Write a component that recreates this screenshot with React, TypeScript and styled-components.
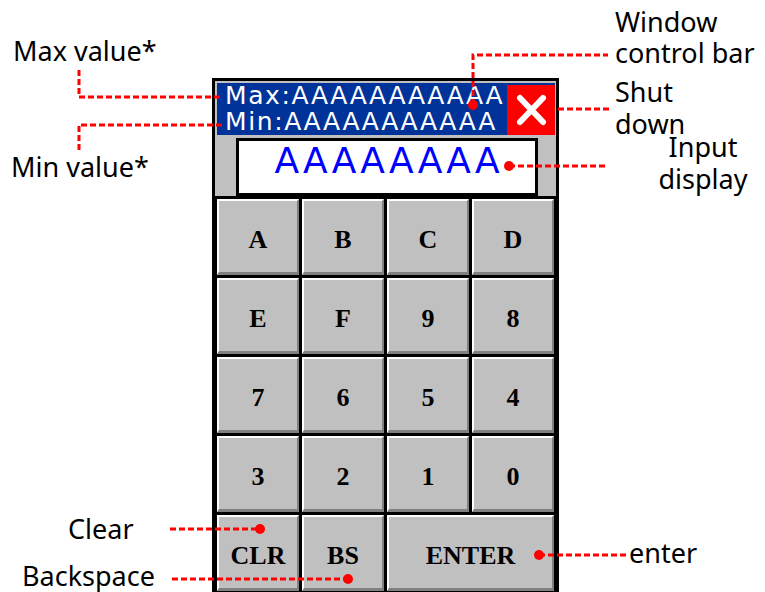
import React from "react";
import styled, { createGlobalStyle } from "styled-components";

const Global = createGlobalStyle`
  html, body { margin: 0; padding: 0; background: #fff; }
  body { font-family: "Noto Sans", "DejaVu Sans", sans-serif; }
`;

const Canvas = styled.div`
  position: relative;
  width: 765px;
  height: 592px;
  overflow: hidden;
  background: #fff;
`;

const Panel = styled.div`
  box-sizing: border-box;
  width: 347px;
  margin: 78px 0 0 212px;
  border: 3px solid #000;
  border-bottom: none;
  background: #c0c0c0;
  display: flex;
  flex-direction: column;
`;

const TopArea = styled.div`
  padding: 2px 1px 0 2px;
`;

const Header = styled.div`
  height: 52px;
  background: #003399;
  display: flex;
  align-items: stretch;
`;

const Limits = styled.div`
  flex: 1;
  min-width: 0;
  padding-left: 8px;
  font-family: "DejaVu Sans", sans-serif;
  font-size: 25px;
  line-height: 26px;
  letter-spacing: 1.6px;
  color: #fff;
  white-space: nowrap;
`;

const CloseBox = styled.div`
  flex: none;
  width: 48px;
  margin-top: 2px;
  background: #ff0000;
  display: flex;
  align-items: center;
  justify-content: center;
`;

const InputArea = styled.div`
  height: 61px;
  display: flex;
  align-items: flex-end;
  padding-left: 21px;
`;

const Display = styled.div`
  box-sizing: border-box;
  width: 302px;
  height: 58px;
  border: 3px solid #000;
  background: #fff;
  padding: 2px 0 0 3px;
  text-align: center;
  font-family: "DejaVu Sans", sans-serif;
  font-size: 36px;
  line-height: 36px;
  letter-spacing: 3px;
  color: #0000ff;
`;

const Keypad = styled.div`
  background: #000;
  padding: 3px 2px 3px 2px;
  display: grid;
  grid-template-columns: repeat(4, 1fr);
  grid-auto-rows: 76px;
  gap: 3px;
`;

const Key = styled.div<{ $span?: number }>`
  box-sizing: border-box;
  grid-column: span ${(p) => p.$span ?? 1};
  background: #c0c0c0;
  border-style: solid;
  border-width: 2px 2px 3px 2px;
  border-color: #ffffff #808080 #808080 #ffffff;
  padding-top: 6px;
  display: flex;
  align-items: center;
  justify-content: center;
  font-family: "Liberation Serif", "Times New Roman", serif;
  font-weight: bold;
  font-size: 26px;
  color: #000;
`;

const Overlay = styled.svg`
  position: absolute;
  left: 0;
  top: 0;
  pointer-events: none;
`;

const Callout = styled.div<{ $x: number; $y: number; $w?: number; $center?: boolean; $lh?: number }>`
  position: absolute;
  left: ${(p) => p.$x}px;
  top: ${(p) => p.$y}px;
  ${(p) => (p.$w ? `width: ${p.$w}px;` : "")}
  text-align: ${(p) => (p.$center ? "center" : "left")};
  font-family: "Noto Sans", "Open Sans", sans-serif;
  font-size: 27px;
  line-height: ${(p) => p.$lh ?? 30}px;
  color: #000;
  white-space: nowrap;
`;

const keys: { label: string; span?: number }[] = [
  { label: "A" }, { label: "B" }, { label: "C" }, { label: "D" },
  { label: "E" }, { label: "F" }, { label: "9" }, { label: "8" },
  { label: "7" }, { label: "6" }, { label: "5" }, { label: "4" },
  { label: "3" }, { label: "2" }, { label: "1" }, { label: "0" },
  { label: "CLR" }, { label: "BS" }, { label: "ENTER", span: 2 },
];

const lines = [
  "M79,70 V97 H222",
  "M222,125 H79 V153",
  "M473,105 V55 H608",
  "M558,109 H610",
  "M509,166 H607",
  "M170,529 H260",
  "M172,579 H348",
  "M539,555 H627",
];

const dots: [number, number][] = [
  [473, 105],
  [509, 166],
  [260, 529],
  [348, 579],
  [539, 555],
];

export default function App() {
  return (
    <>
      <Global />
      <Canvas>
        <Panel>
          <TopArea>
            <Header>
              <Limits>
                <div>Max:AAAAAAAAAAA</div>
                <div>Min:AAAAAAAAAAA</div>
              </Limits>
              <CloseBox>
                <svg width="48" height="50" viewBox="0 0 48 50">
                  <path
                    d="M13,13 L36,37 M36,13 L13,37"
                    stroke="#fff"
                    strokeWidth="6"
                    strokeLinecap="round"
                    fill="none"
                  />
                </svg>
              </CloseBox>
            </Header>
          </TopArea>
          <InputArea>
            <Display>AAAAAAAA</Display>
          </InputArea>
          <Keypad>
            {keys.map((k) => (
              <Key key={k.label} $span={k.span}>
                {k.label}
              </Key>
            ))}
          </Keypad>
        </Panel>

        <Overlay width="765" height="592" viewBox="0 0 765 592">
          {lines.map((d) => (
            <path
              key={d}
              d={d}
              stroke="#ff0000"
              strokeWidth="3"
              strokeDasharray="6 3"
              fill="none"
            />
          ))}
          {dots.map(([x, y]) => (
            <circle key={`${x}-${y}`} cx={x} cy={y} r="5" fill="#ff0000" />
          ))}
        </Overlay>

        <Callout $x={13} $y={36}>Max value*</Callout>
        <Callout $x={11} $y={152}>Min value*</Callout>
        <Callout $x={615} $y={6} $lh={31}>
          Window
          <br />
          control bar
        </Callout>
        <Callout $x={615} $y={76} $lh={32}>
          Shut
          <br />
          down
        </Callout>
        <Callout $x={653} $y={131} $w={100} $center $lh={32}>
          Input
          <br />
          display
        </Callout>
        <Callout $x={68} $y={514}>Clear</Callout>
        <Callout $x={22} $y={561}>Backspace</Callout>
        <Callout $x={629} $y={538}>enter</Callout>
      </Canvas>
    </>
  );
}
